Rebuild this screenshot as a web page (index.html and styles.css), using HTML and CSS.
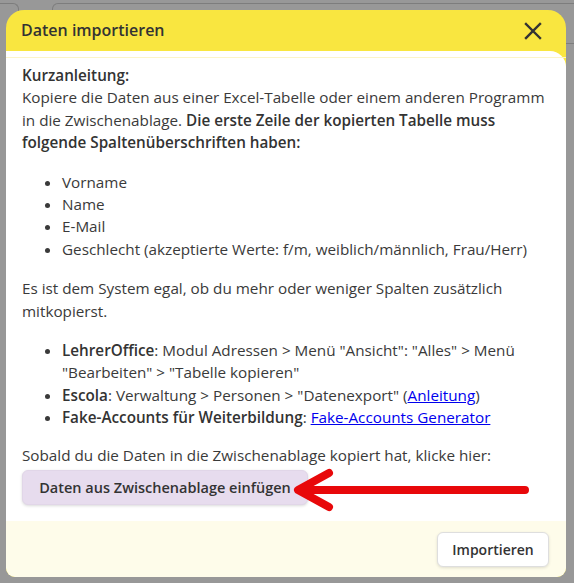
FILE: index.html
```html
<!DOCTYPE html>
<html lang="de">
<head>
<meta charset="utf-8">
<title>Daten importieren</title>
<link rel="stylesheet" href="styles.css">
</head>
<body>
<div class="page">
  <div class="bg-box bg-box-left"></div>
  <div class="bg-box bg-box-main"></div>
</div>
<div class="bg-line"></div>

<div class="dialog">
  <div class="dialog-header">
    <h2 class="dialog-title">Daten importieren</h2>
    <button class="close-btn" aria-label="Schliessen">
      <svg width="18" height="18" viewBox="0 0 18 18"><path d="M2 2 L16 16 M16 2 L2 16" stroke="#333" stroke-width="2.4" stroke-linecap="square" fill="none"/></svg>
    </button>
  </div>
  <div class="dialog-body">
    <div class="scroll">
      <p><strong>Kurzanleitung:</strong><br>Kopiere die Daten aus einer Excel-Tabelle oder einem anderen Programm in die Zwischenablage. <strong>Die erste Zeile der kopierten Tabelle muss folgende Spaltenüberschriften haben:</strong></p>
      <ul>
        <li>Vorname</li>
        <li>Name</li>
        <li>E-Mail</li>
        <li>Geschlecht (akzeptierte Werte: f/m, weiblich/männlich, Frau/Herr)</li>
      </ul>
      <p>Es ist dem System egal, ob du mehr oder weniger Spalten zusätzlich mitkopierst.</p>
      <ul class="sources">
        <li><strong>LehrerOffice</strong>: Modul Adressen &gt; Menü "Ansicht": "Alles" &gt; Menü "Bearbeiten" &gt; "Tabelle kopieren"</li>
        <li><strong>Escola</strong>: Verwaltung &gt; Personen &gt; "Datenexport" (<a href="#">Anleitung</a>)</li>
        <li><strong>Fake-Accounts für Weiterbildung</strong>: <a href="#">Fake-Accounts Generator</a></li>
      </ul>
      <p class="lead-in">Sobald du die Daten in die Zwischenablage kopiert hat, klicke hier:</p>
      <div class="paste-row">
        <button class="paste-btn">Daten aus Zwischenablage einfügen</button>
        <svg class="arrow" width="240" height="44" viewBox="0 0 240 44"><path d="M6 22 L232 22 M36 5 L5 22 L36 39" stroke="#e8080a" stroke-width="8" stroke-linecap="round" stroke-linejoin="round" fill="none"/></svg>
      </div>
    </div>
  </div>
  <div class="dialog-footer">
    <button class="import-btn">Importieren</button>
  </div>
</div>
</body>
</html>
```
FILE: styles.css
```css
html, body {
  margin: 0;
  padding: 0;
}
body {
  width: 574px;
  height: 583px;
  background: #989898;
  overflow: hidden;
  position: relative;
  font-family: "Open Sans", "Noto Sans", sans-serif;
}
.page {
  display: flex;
  gap: 33px;
  padding-top: 3px;
}
.bg-box {
  height: 60px;
  border: 1px solid #7d7d7d;
  border-bottom: none;
}
.bg-box-left {
  width: 20px;
  margin-left: -2px;
  border-left: none;
  border-radius: 0 6px 0 0;
}
.bg-box-main {
  flex: 1;
  margin-right: -10px;
  border-radius: 6px 0 0 0;
}
.bg-line {
  position: absolute;
  left: 560px;
  right: 0;
  top: 43px;
  border-top: 1px solid #7d7d7d;
}
.dialog {
  position: absolute;
  left: 6px;
  top: 10px;
  width: 560px;
  height: 567px;
  background: #f9e640;
  border-radius: 18px 18px 9px 9px;
  overflow: hidden;
  display: flex;
  flex-direction: column;
}
.dialog-header {
  height: 41px;
  display: flex;
  align-items: center;
  justify-content: space-between;
  padding: 0 24px 0 15px;
  flex-shrink: 0;
}
.dialog-title {
  margin: 0;
  font-size: 16px;
  font-weight: 600;
  color: #333;
  padding-bottom: 1px;
}
.close-btn {
  background: none;
  border: none;
  padding: 0;
  width: 18px;
  height: 18px;
  display: flex;
}
.dialog-body {
  flex: 1;
  min-height: 0;
  background: #fff;
  border-radius: 0 16px 0 0;
  color: #3a3a3a;
  font-size: 15.25px;
  line-height: 22.4px;
}
.scroll {
  border-top: 1px solid #fcf5c8;
  margin-top: 6px;
  padding: 6px 16px 16px;
}
.scroll p {
  margin: 0 0 17px;
}
.scroll p.lead-in {
  margin-bottom: 4px;
}
.scroll ul {
  margin: 0 0 17px;
  padding-left: 40px;
}
.scroll ul.sources {
  margin-bottom: 15px;
}
strong {
  font-weight: 600;
  color: #333;
}
a {
  color: #0000ee;
}
.paste-row {
  display: flex;
  align-items: flex-start;
}
.paste-btn {
  font-family: inherit;
  font-size: 14.5px;
  font-weight: 600;
  color: #333;
  background: #e7dcee;
  border: 1px solid #e1d6e8;
  border-radius: 6px;
  height: 35px;
  width: 286px;
  box-shadow: 0 1px 3px rgba(0,0,0,0.15);
  flex-shrink: 0;
}
.arrow {
  margin: -2px 0 -7px -15px;
  flex-shrink: 0;
}
.dialog-footer {
  height: 56px;
  background: #fefcea;
  display: flex;
  align-items: center;
  justify-content: flex-end;
  padding: 0 17px;
  flex-shrink: 0;
}
.import-btn {
  font-family: inherit;
  font-size: 14px;
  font-weight: 600;
  color: #333;
  background: #fff;
  border: 1px solid #dedede;
  border-radius: 6px;
  height: 35px;
  width: 112px;
  box-shadow: 0 1px 3px rgba(0,0,0,0.12);
}
```
